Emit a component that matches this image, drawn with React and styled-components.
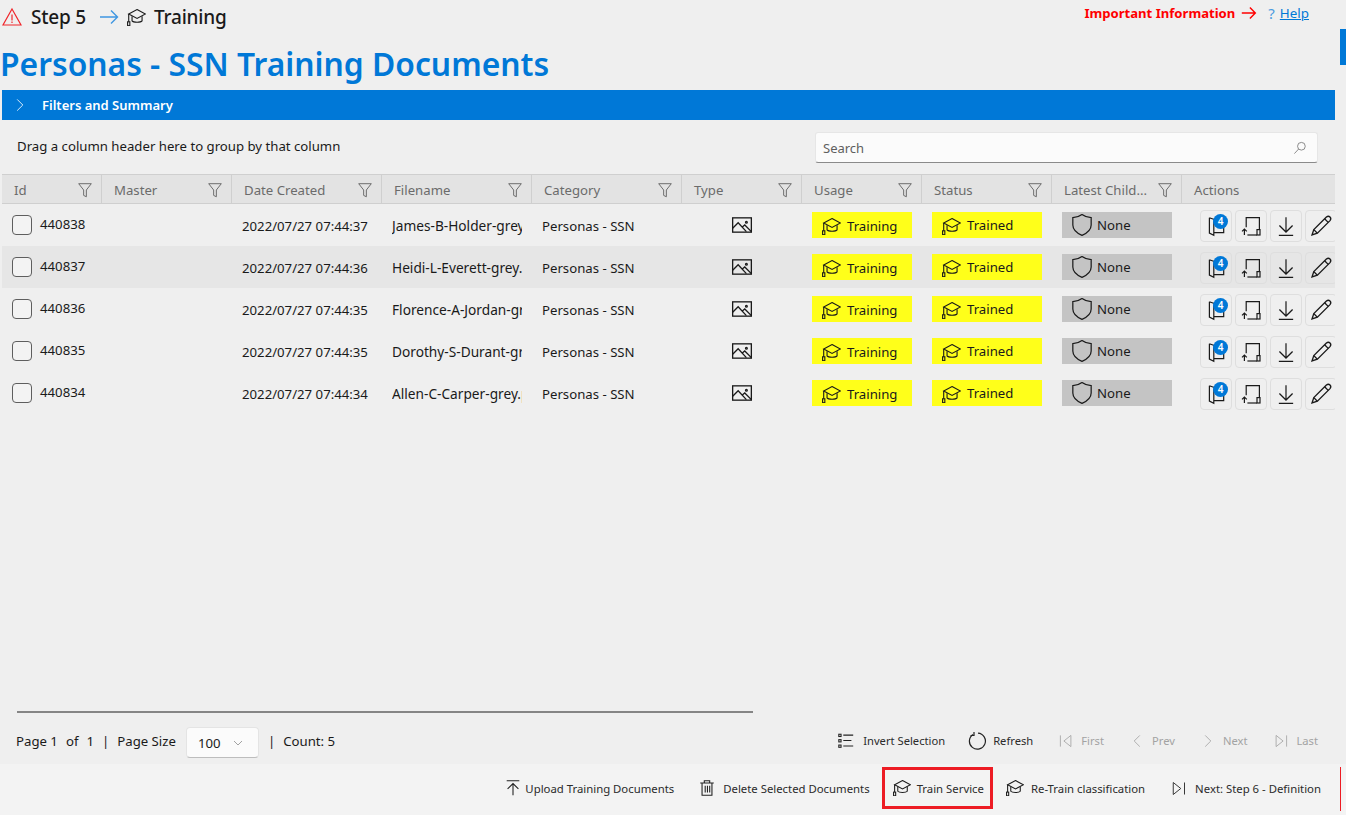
import React from 'react';
import styled, { createGlobalStyle } from 'styled-components';

const GlobalStyle = createGlobalStyle`
  html, body {
    margin: 0;
    height: 100%;
    overflow: hidden;
    background: #efefef;
    font-family: "Noto Sans", "Open Sans", sans-serif;
    color: #1a1a1a;
  }
  * { box-sizing: border-box; }
`;

const Page = styled.div`
  position: relative;
  width: 1346px;
  height: 815px;
  display: flex;
  flex-direction: column;
  overflow: hidden;
`;

const TopBar = styled.header`
  height: 33px;
  display: flex;
  justify-content: space-between;
  align-items: center;
  padding: 0 37px 0 2px;
`;

const Crumbs = styled.div`
  display: flex;
  align-items: center;
  font-size: 19px;
  font-weight: 500;
  letter-spacing: -0.2px;
`;

const CrumbStep = styled.span`
  margin: 0 13px 0 9px;
`;

const CrumbIcon = styled.span`
  display: flex;
  margin: 2px 8px 0 8px;
`;

const InfoLinks = styled.div`
  display: flex;
  align-items: center;
  font-size: 13.4px;
  margin-top: -7px;
`;

const Important = styled.span`
  color: #f00;
  font-size: 13.1px;
  font-weight: 700;
  margin-right: 5px;
  margin-top: -1px;
`;

const Question = styled.span`
  color: #4a9be0;
  font-size: 15px;
  margin: 0 5px 0 10px;
`;

const HelpLink = styled.a`
  color: #0078d7;
  text-decoration: underline;
`;

const ScrollMark = styled.div`
  position: absolute;
  top: 29px;
  right: 0;
  width: 6px;
  height: 36px;
  background: #0078d7;
`;

const Title = styled.h1`
  margin: 0;
  height: 57px;
  padding: 8px 0 0 0;
  font-size: 31.8px;
  line-height: 45px;
  font-weight: 600;
  color: #0078d7;
  white-space: nowrap;
`;

const FilterBar = styled.div`
  height: 30px;
  margin: 0 11px 0 2px;
  display: flex;
  align-items: center;
  gap: 15px;
  padding-left: 11px;
  background: #0078d7;
  color: #fff;
  font-size: 13px;
  font-weight: 600;
`;

const GroupRow = styled.div`
  height: 54px;
  display: flex;
  justify-content: space-between;
  align-items: flex-start;
  padding: 12px 28px 0 17px;
  font-size: 13.2px;
`;

const GroupHint = styled.span`
  line-height: 29px;
`;

const SearchBox = styled.div`
  width: 503px;
  height: 31px;
  display: flex;
  align-items: center;
  justify-content: space-between;
  padding: 0 10px 0 7px;
  background: #fbfbfb;
  border: 1px solid #e6e6e6;
  border-bottom: 1px solid #8a8a8a;
  border-radius: 3px;
  font-size: 13px;
  color: #5f5f5f;
`;

const Grid = styled.div`
  flex: 1;
  margin: 0 11px 0 2px;
  overflow: hidden;
`;

const columns = '100px 130px 150px 150px 150px 120px 120px 130px 130px 153px';

const HeaderRow = styled.div`
  display: grid;
  grid-template-columns: ${columns};
  height: 30px;
  background: #e3e3e3;
  border-top: 1px solid #cfcfcf;
  border-bottom: 1px solid #cfcfcf;
`;

const HeaderCell = styled.div`
  display: flex;
  align-items: center;
  justify-content: space-between;
  padding: 2px 8px 0 12px;
  font-size: 13.2px;
  color: #6b6b6b;
  margin-left: ${(props) => (props.$first ? 0 : -1)}px;
  border-left: ${(props) => (props.$first ? 'none' : '1px solid #cfcfcf')};
`;

const Row = styled.div`
  display: grid;
  grid-template-columns: ${columns};
  align-items: center;
  height: 42px;
  background: ${(props) => (props.$alt ? '#e6e6e6' : 'transparent')};
  font-size: 13.2px;
`;

const Cell = styled.div`
  margin: 1px 10px 0;
  font-size: ${(props) => props.$size || 13.2}px;
  white-space: nowrap;
  overflow: hidden;
`;

const IdCell = styled.div`
  display: flex;
  align-items: center;
  gap: 8px;
  padding: 0 0 1px 10px;
`;

const IdText = styled.span`
  margin-top: -1px;
`;

const CheckBox = styled.span`
  width: 20px;
  height: 20px;
  background: #f3f3f3;
  border: 1px solid #5e5e5e;
  border-radius: 4px;
`;

const TypeCell = styled.div`
  display: flex;
  justify-content: center;
  padding: 0 0 1px 0;
`;

const Badge = styled.div`
  width: ${(props) => props.$width}px;
  height: 26px;
  margin-left: 10px;
  display: flex;
  align-items: center;
  gap: ${(props) => props.$gap || 6}px;
  padding-left: 10px;
  background: ${(props) => props.$bg};
  color: #1a1a1a;
`;

const BadgeIcon = styled.span`
  display: flex;
  margin-top: 3px;
`;

const BadgeText = styled.span`
  margin-top: ${(props) => (props.$raised ? 0 : 2)}px;
`;

const Actions = styled.div`
  display: flex;
  gap: 3px;
  padding: 2px 0 0 18px;
`;

const ActionButton = styled.button`
  position: relative;
  flex: none;
  width: 32px;
  height: 32px;
  padding: 0;
  display: flex;
  align-items: center;
  justify-content: center;
  background: transparent;
  color: #1a1a1a;
  border: 1px solid #dedede;
  border-radius: 4px;
`;

const CountBubble = styled.span`
  position: absolute;
  top: 3px;
  right: 3px;
  width: 15px;
  height: 15px;
  border-radius: 50%;
  background: #0078d7;
  color: #fff;
  font: 600 10px/15px "Noto Sans", sans-serif;
  text-align: center;
`;

const ScrollTrack = styled.div`
  width: 736px;
  height: 2px;
  margin-left: 17px;
  background: #858585;
`;

const Pager = styled.div`
  height: 51px;
  display: flex;
  justify-content: space-between;
  align-items: center;
  padding: 4px 28px 0 16px;
  font-size: 13.2px;
`;

const PagerInfo = styled.div`
  display: flex;
  align-items: center;
`;

const PagerPart = styled.span`
  margin-right: ${(props) => props.$gap || 0}px;
`;

const SizeSelect = styled.div`
  width: 73px;
  height: 31px;
  margin: 3px 9px 0 10px;
  display: flex;
  align-items: center;
  justify-content: space-between;
  padding: 1px 15px 0 11px;
  background: #fbfbfb;
  border: 1px solid #e4e4e4;
  border-bottom-color: #bdbdbd;
  border-radius: 4px;
`;

const PagerButtons = styled.div`
  display: flex;
  align-items: center;
`;

const PagerButton = styled.div`
  display: flex;
  align-items: center;
  gap: ${(props) => props.$gap || 8}px;
  margin-left: ${(props) => props.$left || 0}px;
  font-size: 11.2px;
  color: ${(props) => (props.$off ? '#a3a3a3' : '#2b2b2b')};
`;

const CommandBar = styled.footer`
  height: 51px;
  display: flex;
  justify-content: flex-end;
  align-items: center;
  padding: 0 5px 3px 0;
  background: #f3f3f3;
  font-size: 11.35px;
`;

const Command = styled.div`
  display: flex;
  align-items: center;
  height: 42px;
  gap: ${(props) => props.$gap || 7}px;
  padding: 0 ${(props) => props.$right ?? 12}px 0 ${(props) => props.$left ?? 12}px;
  color: #2b2b2b;
  white-space: nowrap;
  border: ${(props) => (props.$marked ? '3px solid #ed1c24' : 'none')};
`;

const RedRule = styled.div`
  width: 1px;
  height: 44px;
  margin: 2px 0 0 7px;
  background: #ed1c24;
`;

const Svg = ({ size = 20, color = 'currentColor', width = 1.2, children }) => (
  <svg width={size} height={size} viewBox="0 0 20 20" fill="none" stroke={color} strokeWidth={width}>
    {children}
  </svg>
);

const GradCap = ({ size = 19, color = '#1a1a1a', width = 1 }) => (
  <svg width={size} height={size * 0.92} viewBox="2 3 17 15.700" fill="none" stroke={color} strokeWidth={width}>
    <path d="M11 3.500 18.500 7.500 11 11.500 3.500 7.500Z" />
    <path d="M6.500 9.500v4.200c1.200 1.600 7.800 1.600 9 0V9.500" />
    <path d="M3.500 7.500v7" />
    <rect x="2.500" y="14.500" width="2" height="3.500" />
  </svg>
);

const Funnel = () => (
  <Svg size={18} color="#6b6b6b" width={1.1}>
    <path d="M3 3h14l-5.500 7v7.500l-3-1.500v-6Z" />
  </Svg>
);

const Warning = () => (
  <Svg size={20} color="#f0262b">
    <path d="M10 2 19 18H1Z" />
    <path d="M10 7.500v6M10 14.500v1.500" />
  </Svg>
);

const Arrow = () => (
  <Svg color="#3f97e2" width={1.4}>
    <path d="M1 10h17M12 3.500 18.500 10 12 16.500" />
  </Svg>
);

const ImageIcon = () => (
  <Svg size={22} color="#1a1a1a" width={1.2}>
    <rect x="1.500" y="3.500" width="17" height="13" />
    <path d="M1.500 13 6.500 8 14 16M10 12l2.500-2 6 6" />
    <circle cx="14" cy="7.500" r="0.800" />
  </Svg>
);

const Shield = () => (
  <svg width="20" height="22" viewBox="2 1 16 18" fill="none" stroke="#1a1a1a" strokeWidth="1">
    <path d="M10 1.500c2 1.500 4.500 2.500 7.500 2.500v6c0 4-3 6.500-7.500 8.500-4.500-2-7.500-4.500-7.500-8.500V4c3 0 5.500-1 7.500-2.500Z" />
  </svg>
);

const NotesIcon = () => (
  <Svg size={22} width={1.1}>
    <path d="M4 2.500 11 5M4 2.500v14l4 2v-2.500h9V9" />
    <path d="M8 15.500V5" />
  </Svg>
);

const ReturnIcon = () => (
  <Svg size={24} width={1}>
    <path d="M6 11V3h11v10" />
    <path d="M7 17.500h8" />
    <rect x="15" y="13" width="2.500" height="4.500" />
    <path d="M4.500 12.500v5M2.500 14.500l2-2 2 2" />
  </Svg>
);

const DownloadIcon = () => (
  <Svg size={22} width={1.1}>
    <path d="M10 2v13M4 9.500 10 15.500l6-6M3.500 18.500h13" />
  </Svg>
);

const PencilIcon = () => (
  <Svg size={24} width={1.1}>
    <path d="M2.500 17.500 4 13 14.500 2.500c1-.8 2.200-.8 3 0s.8 2 0 3L7 16Z" />
    <path d="M4 13l3 3M13 4l3 3" />
  </Svg>
);

const ChevronRight = ({ size = 14, color = '#fff' }) => (
  <Svg size={size} color={color}>
    <path d="M6 2 14 10 6 18" />
  </Svg>
);

const ChevronLeft = ({ size = 14, color = '#a3a3a3' }) => (
  <Svg size={size} color={color}>
    <path d="M14 2 6 10 14 18" />
  </Svg>
);

const SearchIcon = () => (
  <Svg size={14} color="#777">
    <circle cx="12" cy="7.500" r="5.500" />
    <path d="M8 11.500 2 18" />
  </Svg>
);

const ListIcon = () => (
  <Svg size={18} color="#222">
    <rect x="2" y="2.500" width="2.500" height="2.500" />
    <rect x="2" y="8.500" width="2.500" height="2.500" />
    <rect x="2" y="14.500" width="2.500" height="2.500" />
    <path d="M7 3.500h11M7 9.500h9M7 15.500h11" />
  </Svg>
);

const RefreshIcon = () => (
  <Svg size={20} color="#222">
    <path d="M6 3.500a8 8 0 1 0 5-1.300M7 1v3.500H3.500" />
  </Svg>
);

const FirstIcon = () => (
  <Svg size={14} color="#a3a3a3">
    <path d="M2 2v16M17 2 7 10l10 8Z" />
  </Svg>
);

const LastIcon = ({ color = '#a3a3a3', size = 14 }) => (
  <Svg size={size} color={color}>
    <path d="M18 2v16M3 2l10 8-10 8Z" />
  </Svg>
);

const UploadIcon = () => (
  <Svg size={18} color="#222">
    <path d="M3 2h14M10 18V5M4 11l6-6 6 6" />
  </Svg>
);

const TrashIcon = () => (
  <Svg size={18} color="#222">
    <path d="M2.500 4.500h15M7 4.500V2h6v2.500M4.500 4.500V18h11V4.500M8 7.500v7.500M10.500 7.500v7.500M13 7.500v7.500" />
  </Svg>
);

const columnNames = ['Id', 'Master', 'Date Created', 'Filename', 'Category', 'Type', 'Usage', 'Status', 'Latest Child...'];

const documents = [
  { id: 440838, date: '2022/07/27 07:44:37', file: 'James-B-Holder-grey.png' },
  { id: 440837, date: '2022/07/27 07:44:36', file: 'Heidi-L-Everett-grey.png' },
  { id: 440836, date: '2022/07/27 07:44:35', file: 'Florence-A-Jordan-grey.png' },
  { id: 440835, date: '2022/07/27 07:44:35', file: 'Dorothy-S-Durant-grey.png' },
  { id: 440834, date: '2022/07/27 07:44:34', file: 'Allen-C-Carper-grey.png' },
];

export default function App() {
  return (
    <Page>
      <GlobalStyle />
      <TopBar>
        <Crumbs>
          <Warning />
          <CrumbStep>Step 5</CrumbStep>
          <Arrow />
          <CrumbIcon>
            <GradCap />
          </CrumbIcon>
          <span>Training</span>
        </Crumbs>
        <InfoLinks>
          <Important>Important Information</Important>
          <Svg size={18} color="#f00" width={1.6}>
            <path d="M2 10h15M11 4l6 6-6 6" />
          </Svg>
          <Question>?</Question>
          <HelpLink href="#">Help</HelpLink>
        </InfoLinks>
      </TopBar>
      <ScrollMark />
      <Title>Personas - SSN Training Documents</Title>
      <FilterBar>
        <ChevronRight />
        Filters and Summary
      </FilterBar>
      <GroupRow>
        <GroupHint>Drag a column header here to group by that column</GroupHint>
        <SearchBox>
          Search
          <SearchIcon />
        </SearchBox>
      </GroupRow>
      <Grid>
        <HeaderRow>
          {columnNames.map((name, i) => (
            <HeaderCell key={name} $first={i === 0}>
              {name}
              <Funnel />
            </HeaderCell>
          ))}
          <HeaderCell>Actions</HeaderCell>
        </HeaderRow>
        {documents.map((doc, i) => (
          <Row key={doc.id} $alt={i === 1}>
            <IdCell>
              <CheckBox />
              <IdText>{doc.id}</IdText>
            </IdCell>
            <Cell />
            <Cell>{doc.date}</Cell>
            <Cell $size={13.7}>{doc.file}</Cell>
            <Cell>Personas - SSN</Cell>
            <TypeCell>
              <ImageIcon />
            </TypeCell>
            <Badge $width={100} $bg="#ffff1a">
              <BadgeIcon>
                <GradCap />
              </BadgeIcon>
              <BadgeText>Training</BadgeText>
            </Badge>
            <Badge $width={110} $bg="#ffff1a">
              <BadgeIcon>
                <GradCap />
              </BadgeIcon>
              <BadgeText $raised>Trained</BadgeText>
            </Badge>
            <Badge $width={110} $bg="#c4c4c4" $gap={5}>
              <Shield />
              <BadgeText $raised>None</BadgeText>
            </Badge>
            <Actions>
              <ActionButton>
                <NotesIcon />
                <CountBubble>4</CountBubble>
              </ActionButton>
              <ActionButton>
                <ReturnIcon />
              </ActionButton>
              <ActionButton>
                <DownloadIcon />
              </ActionButton>
              <ActionButton>
                <PencilIcon />
              </ActionButton>
            </Actions>
          </Row>
        ))}
      </Grid>
      <ScrollTrack />
      <Pager>
        <PagerInfo>
          <PagerPart $gap={8}>Page 1</PagerPart>
          <PagerPart $gap={8}>of</PagerPart>
          <PagerPart $gap={8}>1</PagerPart>
          <PagerPart $gap={8}>|</PagerPart>
          <PagerPart>Page Size</PagerPart>
          <SizeSelect>
            100
            <Svg size={10} color="#666">
              <path d="M2 6l8 8 8-8" />
            </Svg>
          </SizeSelect>
          <PagerPart $gap={8}>|</PagerPart>
          <PagerPart>Count: 5</PagerPart>
        </PagerInfo>
        <PagerButtons>
          <PagerButton>
            <ListIcon />
            Invert Selection
          </PagerButton>
          <PagerButton $left={22} $gap={6}>
            <RefreshIcon />
            Refresh
          </PagerButton>
          <PagerButton $left={26} $off>
            <FirstIcon />
            First
          </PagerButton>
          <PagerButton $left={26} $off>
            <ChevronLeft />
            Prev
          </PagerButton>
          <PagerButton $left={26} $off>
            <ChevronRight color="#a3a3a3" />
            Next
          </PagerButton>
          <PagerButton $left={27} $off>
            <LastIcon />
            Last
          </PagerButton>
        </PagerButtons>
      </Pager>
      <CommandBar>
        <Command $gap={3}>
          <UploadIcon />
          Upload Training Documents
        </Command>
        <Command>
          <TrashIcon />
          Delete Selected Documents
        </Command>
        <Command $marked $left={8} $right={6} $gap={6}>
          <GradCap size={18} />
          Train Service
        </Command>
        <Command $left={13}>
          <GradCap size={18} />
          Re-Train classification
        </Command>
        <Command $left={14} $gap={9}>
          <LastIcon color="#222" size={15} />
          Next: Step 6 - Definition
        </Command>
        <RedRule />
      </CommandBar>
    </Page>
  );
}
